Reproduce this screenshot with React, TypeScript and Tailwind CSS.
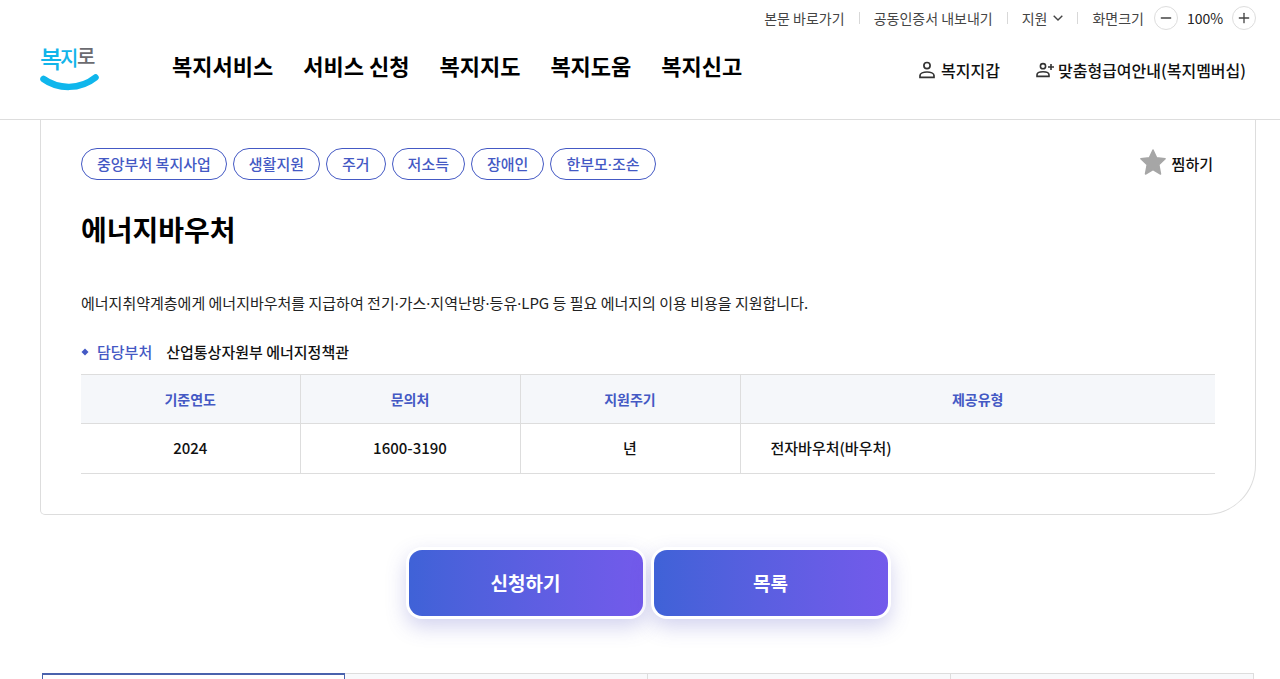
import { Fragment, useState } from 'react';
import { Minus, Plus } from 'lucide-react';

const menus = ['복지서비스', '서비스 신청', '복지지도', '복지도움', '복지신고'];
const tags = ['중앙부처 복지사업', '생활지원', '주거', '저소득', '장애인', '한부모·조손'];
const tabs = ['tab-1', 'tab-2', 'tab-3', 'tab-4'];

function Logo() {
  return (
    <svg viewBox="0 0 60 54" className="w-[60px] h-[54px]" role="img" aria-label="복지로">
      <g fontWeight="500">
        <text x="0" y="29" fontSize="24" fill="#12b5ea">복</text>
        <text x="20" y="27" fontSize="20" fill="#12b5ea">지</text>
        <text x="37" y="25" fontSize="20" fill="#6b6b70">로</text>
      </g>
      <path d="M3.5 40 C18 50.5 40 51 55.5 38.5" fill="none" stroke="#0fb6ec" strokeWidth="6.5" strokeLinecap="round" />
    </svg>
  );
}

function PersonIcon() {
  return (
    <svg viewBox="0 0 16 18" className="w-4 h-[18px]" fill="none" stroke="#333" strokeWidth="1.7">
      <circle cx="8" cy="4.6" r="3.1" />
      <path d="M1 16.4v-1.8c0-2.2 3.4-3.6 7-3.6s7 1.4 7 3.6v1.8z" />
    </svg>
  );
}

function PersonPlusIcon() {
  return (
    <svg viewBox="0 0 18 18" className="w-[18px] h-[18px]" fill="none" stroke="#333" strokeWidth="1.6">
      <circle cx="7" cy="5.2" r="2.6" />
      <path d="M1 15.4v-1.6c0-1.9 2.8-3.1 6-3.1s6 1.2 6 3.1v1.6z" />
      <path d="M15 3v6M12 6h6" />
    </svg>
  );
}

function StarIcon() {
  return (
    <svg viewBox="0 0 26 26" className="w-[26px] h-[26px]" fill="#a6a6a6" stroke="#a6a6a6" strokeWidth="1.5" strokeLinejoin="round">
      <path d="M13 1l3.6 7.8 8.5 1-6.3 5.8 1.7 9.4-7.5-4.3L5.5 25l1.7-9.4L.9 9.8l8.5-1z" />
    </svg>
  );
}

function Divider() {
  return (
    <span className="flex px-3.5">
      <span className="w-px h-3 bg-[#d8d8d8]" />
    </span>
  );
}

// the CJK face draws the middle dot very wide, so it is taken from Noto Sans
function DottedText({ text }: { text: string }) {
  return (
    <span>
      {text.split('·').map((part, i) => (
        <Fragment key={i}>
          {i > 0 && <span className="font-['Noto_Sans',sans-serif]">·</span>}
          {part}
        </Fragment>
      ))}
    </span>
  );
}

function Header() {
  const [zoom, setZoom] = useState(100);

  return (
    <header className="shrink-0 h-[120px] pl-10 pr-6 border-b border-[#ddd] bg-white">
      <div className="flex items-center justify-end h-9 text-sm text-[#444]">
        <a href="#content">본문 바로가기</a>
        <Divider />
        <a href="#cert">공동인증서 내보내기</a>
        <Divider />
        <button type="button" className="flex items-center gap-1.5">
          지원
          <svg viewBox="0 0 10 6" className="w-2.5 h-1.5" fill="none" stroke="#444" strokeWidth="1.4">
            <path d="M.7.7L5 5 9.3.7" />
          </svg>
        </button>
        <Divider />
        <span>화면크기</span>
        <button
          type="button"
          aria-label="축소"
          onClick={() => setZoom(zoom - 10)}
          className="flex items-center justify-center w-6 h-6 ml-2.5 border border-[#ddd] rounded-full"
        >
          <Minus className="w-4 h-4" />
        </button>
        <span className="w-[54px] text-center text-[#222]">{zoom}%</span>
        <button
          type="button"
          aria-label="확대"
          onClick={() => setZoom(zoom + 10)}
          className="flex items-center justify-center w-6 h-6 border border-[#ddd] rounded-full"
        >
          <Plus className="w-4 h-4" />
        </button>
      </div>

      <div className="flex items-center h-[60px]">
        <a href="#home" className="mr-[72px]">
          <Logo />
        </a>
        <nav className="flex gap-[30px] pb-0.5 text-[22px] leading-8 font-bold text-black">
          {menus.map((menu) => (
            <a key={menu} href="#menu">{menu}</a>
          ))}
        </nav>
        <div className="flex gap-9 ml-auto pt-2 pr-2.5 text-base font-medium text-[#111]">
          <a href="#wallet" className="flex items-center gap-1.5">
            <PersonIcon />
            복지지갑
          </a>
          <a href="#membership" className="flex items-center gap-1">
            <PersonPlusIcon />
            맞춤형급여안내(복지멤버십)
          </a>
        </div>
      </div>
    </header>
  );
}

function InfoTable() {
  return (
    <table className="w-full table-fixed border-y border-[#ddd] text-center">
      <thead className="bg-[#f5f7fa] text-sm text-[#4459c4]">
        <tr className="h-[49px] border-b border-[#ddd]">
          <th scope="col" className="w-[219px] border-r border-[#ddd] font-bold">기준연도</th>
          <th scope="col" className="w-[220px] border-r border-[#ddd] font-bold">문의처</th>
          <th scope="col" className="w-[220px] border-r border-[#ddd] font-bold">지원주기</th>
          <th scope="col" className="font-bold">제공유형</th>
        </tr>
      </thead>
      <tbody className="text-[15px] font-medium text-[#111]">
        <tr className="h-[50px]">
          <td className="border-r border-[#ddd]">2024</td>
          <td className="border-r border-[#ddd]">1600-3190</td>
          <td className="border-r border-[#ddd]">년</td>
          <td className="pl-[30px] text-left">전자바우처(바우처)</td>
        </tr>
      </tbody>
    </table>
  );
}

function ActionButton({ label }: { label: string }) {
  return (
    <button
      type="button"
      className="w-60 h-[72px] p-[3px] bg-white rounded-2xl shadow-[0_8px_20px_rgba(80,80,190,0.25)]"
    >
      <span className="flex items-center justify-center h-full rounded-[13px] bg-linear-to-r from-[#3f62d7] to-[#735aeb] text-[19px] font-bold text-white">
        {label}
      </span>
    </button>
  );
}

export default function App() {
  const [activeTab, setActiveTab] = useState('tab-1');

  return (
    <div className="flex flex-col h-screen overflow-hidden bg-white font-['Noto_Sans_CJK_KR','Noto_Sans',sans-serif]">
      <Header />

      <main id="content" className="flex-1 min-h-0 overflow-hidden pl-10 pr-6">
        <section className="px-10 pt-7 pb-10 border-x border-b border-[#ddd] rounded-bl-[5px] rounded-br-[50px]">
          <div className="flex items-center justify-between">
            <ul className="flex gap-1.5 text-[15px] font-medium text-[#4459c4]">
              {tags.map((tag) => (
                <li key={tag} className="flex items-center h-8 px-[15px] border border-[#4459c4] rounded-full">
                  <DottedText text={tag} />
                </li>
              ))}
            </ul>
            <button type="button" className="flex items-center gap-1.5 pr-0.5 text-[15px] font-medium text-[#111]">
              <span className="pb-1">
                <StarIcon />
              </span>
              찜하기
            </button>
          </div>

          <h1 className="mt-7 text-[28px] leading-[42px] font-bold text-black">에너지바우처</h1>
          <p className="mt-[41px] text-[15px] leading-6 text-[#222]">
            <DottedText text="에너지취약계층에게 에너지바우처를 지급하여 전기·가스·지역난방·등유·LPG 등 필요 에너지의 이용 비용을 지원합니다." />
          </p>

          <dl className="flex items-center mt-[25px] mb-[10px] text-[15px] leading-6 font-medium">
            <dt className="flex items-center gap-2 text-[#4459c4]">
              <svg viewBox="0 0 8 8" className="w-2 h-2" fill="#4459c4">
                <path d="M4 .5L7.5 4 4 7.5.5 4z" />
              </svg>
              담당부처
            </dt>
            <dd className="ml-3.5 text-[#111]">산업통상자원부 에너지정책관</dd>
          </dl>

          <InfoTable />
        </section>

        <div className="flex justify-center gap-[5px] mt-8">
          <ActionButton label="신청하기" />
          <ActionButton label="목록" />
        </div>

        <div role="tablist" className="grid grid-cols-4 mt-[54px] mx-0.5">
          {tabs.map((tab) => (
            <button
              key={tab}
              type="button"
              role="tab"
              aria-selected={activeTab === tab}
              onClick={() => setActiveTab(tab)}
              className={`h-14 ${
                activeTab === tab
                  ? 'border-x border-t-2 border-[#4a62ad] bg-white'
                  : 'border-t border-r border-[#ddd] bg-[#f8f9fb]'
              }`}
            />
          ))}
        </div>
      </main>
    </div>
  );
}
